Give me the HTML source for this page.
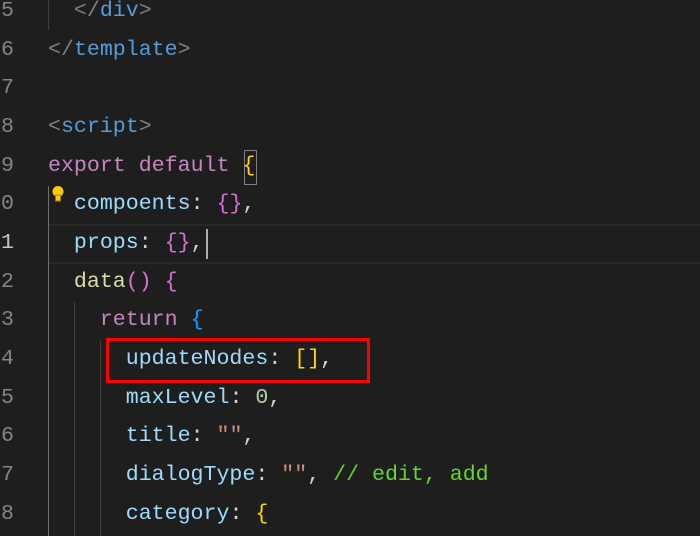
<!DOCTYPE html>
<html><head><meta charset="utf-8"><style>
html,body{margin:0;padding:0;background:#1e1e1e;width:700px;height:536px;overflow:hidden;position:relative}
.l{position:absolute;left:0;height:39px;line-height:39px;font-family:"Liberation Mono","DejaVu Sans Mono",monospace;font-size:21.6px;white-space:pre;color:#d4d4d4}
.n{position:absolute;right:686px;color:#858585;font-family:"Liberation Mono",monospace;font-size:21.6px;height:39px;line-height:39px;white-space:pre}
.t{color:#808080}.tg{color:#569cd6}.k{color:#c586c0}.g{color:#ffd700}.p{color:#9cdcfe}.m{color:#da70d6}.f{color:#dcdcaa}.b{color:#179fff}.num{color:#b5cea8}.s{color:#ce9178}.c{color:#62d82a}
.guide{position:absolute;width:1px;background:#404040}
</style></head><body>
<div style="position:absolute;left:48px;top:224px;width:652px;height:36px;border-top:2px solid #282828;border-bottom:2px solid #282828"></div>
<div class="guide" style="left:48px;top:186px;height:350px;background:#6e6e6e"></div>
<div class="guide" style="left:48px;top:0;height:30px"></div>
<div class="guide" style="left:74px;top:302px;height:234px"></div>
<div class="guide" style="left:100px;top:341px;height:195px"></div>
<div style="position:absolute;left:244px;top:150px;width:11px;height:33px;border:1px solid #808080"></div>

<div class="n" style="top:-8px">65</div>
<div class="n" style="top:31px">66</div>
<div class="n" style="top:69px">67</div>
<div class="n" style="top:108px">68</div>
<div class="n" style="top:147px">69</div>
<div class="n" style="top:185px">70</div>
<div class="n" style="top:224px;color:#c6c6c6">71</div>
<div class="n" style="top:263px">72</div>
<div class="n" style="top:301px">73</div>
<div class="n" style="top:340px">74</div>
<div class="n" style="top:379px">75</div>
<div class="n" style="top:417px">76</div>
<div class="n" style="top:456px">77</div>
<div class="n" style="top:495px">78</div>

<div class="l" style="top:-8px;left:48px">  <span class="t">&lt;/</span><span class="tg">div</span><span class="t">&gt;</span></div>
<div class="l" style="top:31px;left:48px"><span class="t">&lt;/</span><span class="tg">template</span><span class="t">&gt;</span></div>
<div class="l" style="top:108px;left:48px"><span class="t">&lt;</span><span class="tg">script</span><span class="t">&gt;</span></div>
<div class="l" style="top:147px;left:48px"><span class="k">export</span> <span class="k">default</span> <span class="g">{</span></div>
<div class="l" style="top:185px;left:48px">  <span class="p">compoents</span>: <span class="m">{}</span>,</div>
<div class="l" style="top:224px;left:48px">  <span class="p">props</span>: <span class="m">{}</span>,</div>
<div style="position:absolute;left:206px;top:229px;width:2px;height:30px;background:#aeafad"></div>
<div class="l" style="top:263px;left:48px">  <span class="f">data</span><span class="m">()</span> <span class="m">{</span></div>
<div class="l" style="top:301px;left:48px">    <span class="k">return</span> <span class="b">{</span></div>
<div class="l" style="top:340px;left:48px">      <span class="p">updateNodes</span>: <span class="g">[]</span>,</div>
<div class="l" style="top:379px;left:48px">      <span class="p">maxLevel</span>: <span class="num">0</span>,</div>
<div class="l" style="top:417px;left:48px">      <span class="p">title</span>: <span class="s">""</span>,</div>
<div class="l" style="top:456px;left:48px">      <span class="p">dialogType</span>: <span class="s">""</span>, <span class="c">// edit, add</span></div>
<div class="l" style="top:495px;left:48px">      <span class="p">category</span>: <span class="g">{</span></div>

<svg style="position:absolute;left:51px;top:185px" width="14" height="18" viewBox="0 0 14 18"><circle cx="7" cy="6.5" r="5.5" fill="#ffcc00"/><rect x="4.5" y="10" width="5" height="6" fill="#ffcc00" stroke="#b07800" stroke-width="1"/></svg>

<div style="position:absolute;left:106px;top:338px;width:258px;height:39px;border:3px solid #ff0000"></div>
</body></html>
